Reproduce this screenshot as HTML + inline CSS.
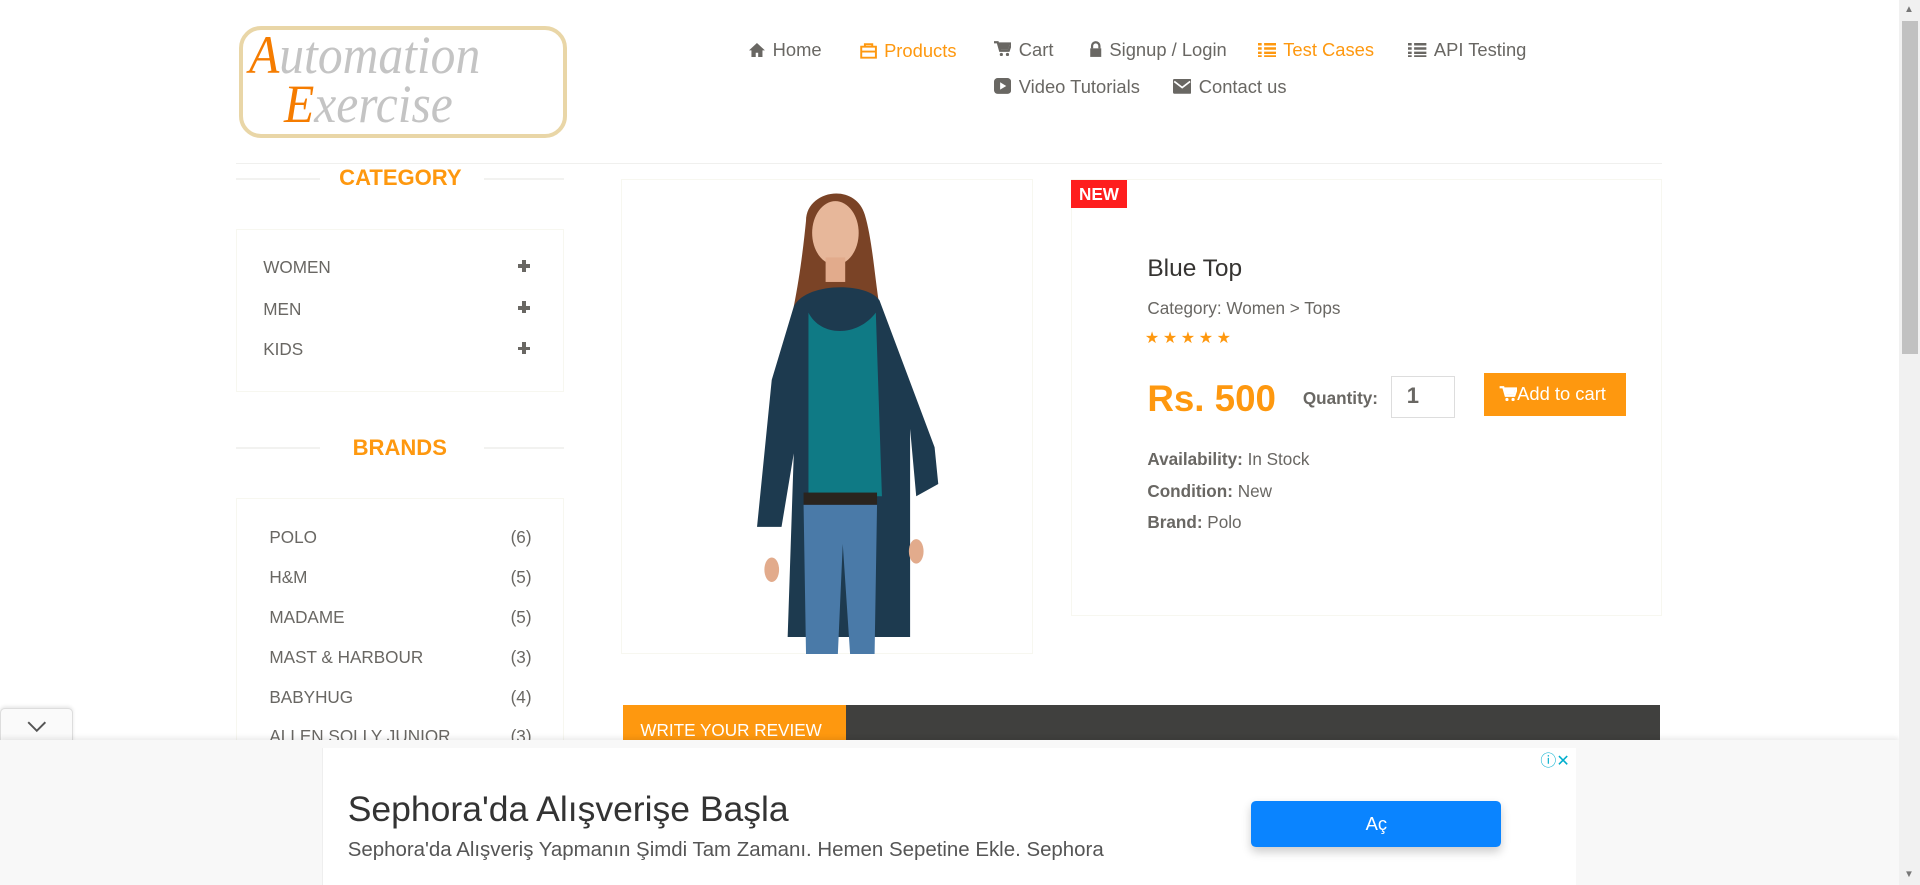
<!DOCTYPE html>
<html><head><meta charset="utf-8">
<style>
html{zoom:1.22449}
*{margin:0;padding:0;box-sizing:border-box}
body{width:1568px;height:723px;overflow:hidden;position:relative;background:#fff;font-family:"Liberation Sans",Arial,sans-serif;color:#696763}
.a{position:absolute;white-space:nowrap}
.nav{font-size:15px;color:#696763}
.nav svg{vertical-align:-1px;margin-right:6px}
.or{color:#FE980F}
.hl{position:absolute;height:2px;background:#f2f2f0}
.box{position:absolute;border:1px solid #F7F7F0}
.h2{font-size:18px;font-weight:bold;color:#FE980F}
.it{font-size:14px;color:#696763}
.b{font-weight:bold}
.pl{position:absolute;width:10px;height:10px}
.pl:before{content:"";position:absolute;left:0;top:4px;width:10px;height:3px;background:#696763}
.pl:after{content:"";position:absolute;left:3.5px;top:0;width:3px;height:10px;background:#696763}
</style></head><body>
<!-- logo -->
<div class="a" style="left:195px;top:21px;width:268px;height:92px;border:4px solid #e9d6a7;border-radius:18px;"></div>
<div class="a" style="left:203px;top:24px;font-family:'Liberation Serif',serif;font-style:italic;font-size:44px;color:#c4c4c4;line-height:44px;transform:scaleX(0.92);transform-origin:left"><span style="color:#f57c00">A</span>utomation</div>
<div class="a" style="left:232px;top:64px;font-family:'Liberation Serif',serif;font-style:italic;font-size:44px;color:#c4c4c4;line-height:44px;transform:scaleX(0.92);transform-origin:left"><span style="color:#f57c00">E</span>xercise</div>

<!-- nav -->
<div class="a nav" style="left:612px;top:32px"><svg width="13" height="12" viewBox="0 0 13 12"><path d="M6.5 0L0 6h2v6h3.5V8h2v4H11V6h2z" fill="#696763"/></svg>Home</div>
<div class="a nav or" style="left:702px;top:33px"><svg width="14" height="13" viewBox="0 0 14 13"><path d="M4 3V1h6v2M1 3h12v9H1zM1 7h12" fill="none" stroke="#FE980F" stroke-width="1.6"/></svg>Products</div>
<div class="a nav" style="left:812px;top:32px"><svg width="14" height="13" viewBox="0 0 14 13"><path d="M0 1h3l2 7h7l2-6H4" fill="none" stroke="#696763" stroke-width="1.8"/><path d="M4 2h9l-1.5 5H5z" fill="#696763"/><circle cx="6" cy="11" r="1.3" fill="#696763"/><circle cx="11" cy="11" r="1.3" fill="#696763"/></svg>Cart</div>
<div class="a nav" style="left:889px;top:32px"><svg width="11" height="13" viewBox="0 0 11 13"><path d="M2.5 6V4a3 3 0 016 0v2" fill="none" stroke="#696763" stroke-width="1.8"/><rect x="1" y="6" width="9" height="7" fill="#696763"/></svg>Signup / Login</div>
<div class="a nav or" style="left:1027px;top:32px"><svg width="15" height="12" viewBox="0 0 15 12"><path d="M0 1h3M5 1h10M0 4.5h3M5 4.5h10M0 8h3M5 8h10M0 11h3M5 11h10" stroke="#FE980F" stroke-width="2"/></svg>Test Cases</div>
<div class="a nav" style="left:1150px;top:32px"><svg width="15" height="12" viewBox="0 0 15 12"><path d="M0 1h3M5 1h10M0 4.5h3M5 4.5h10M0 8h3M5 8h10M0 11h3M5 11h10" stroke="#696763" stroke-width="2"/></svg>API Testing</div>
<div class="a nav" style="left:812px;top:62px"><svg width="14" height="13" viewBox="0 0 14 13"><rect x="0" y="0" width="14" height="13" rx="3" fill="#696763"/><path d="M5 3.5v6l5-3z" fill="#fff"/></svg>Video Tutorials</div>
<div class="a nav" style="left:958px;top:62px"><svg width="15" height="12" viewBox="0 0 15 12"><rect width="15" height="12" rx="1" fill="#696763"/><path d="M1 2l6.5 5L14 2" fill="none" stroke="#fff" stroke-width="1.4"/></svg>Contact us</div>

<div class="hl" style="left:193px;top:133px;width:1164px;height:1px;background:#f0f0ee"></div>

<!-- sidebar -->
<div class="hl" style="left:193px;top:145px;width:68px"></div>
<div class="hl" style="left:395px;top:145px;width:66px"></div>
<div class="a h2" style="left:277px;top:135px">CATEGORY</div>
<div class="box" style="left:193px;top:187px;width:268px;height:133px"></div>
<div class="a it" style="left:215px;top:210px">WOMEN</div>
<div class="a it" style="left:215px;top:244px">MEN</div>
<div class="a it" style="left:215px;top:277px">KIDS</div>
<div class="pl" style="left:423px;top:212px"></div>
<div class="pl" style="left:423px;top:246px"></div>
<div class="pl" style="left:423px;top:279px"></div>

<div class="hl" style="left:193px;top:365px;width:68px"></div>
<div class="hl" style="left:395px;top:365px;width:66px"></div>
<div class="a h2" style="left:288px;top:355px">BRANDS</div>
<div class="box" style="left:193px;top:407px;width:268px;height:220px"></div>
<div class="a it" style="left:220px;top:430px">POLO</div><div class="a it" style="left:417px;top:430px">(6)</div>
<div class="a it" style="left:220px;top:463px">H&amp;M</div><div class="a it" style="left:417px;top:463px">(5)</div>
<div class="a it" style="left:220px;top:496px">MADAME</div><div class="a it" style="left:417px;top:496px">(5)</div>
<div class="a it" style="left:220px;top:528px">MAST &amp; HARBOUR</div><div class="a it" style="left:417px;top:528px">(3)</div>
<div class="a it" style="left:220px;top:561px">BABYHUG</div><div class="a it" style="left:417px;top:561px">(4)</div>
<div class="a it" style="left:220px;top:593px">ALLEN SOLLY JUNIOR</div><div class="a it" style="left:417px;top:593px">(3)</div>

<!-- product image -->
<div class="box" style="left:507px;top:146px;width:337px;height:388px"></div>
<svg class="a" style="left:600px;top:150px" width="180" height="384" viewBox="0 0 180 384">
<path d="M58 30c0-25 40-32 48-5 6 20 8 50 12 75l-70 0c5-25 8-50 10-70z" fill="#7a4326"/>
<ellipse cx="82" cy="40" rx="19" ry="26" fill="#e7b79a"/>
<rect x="74" y="60" width="16" height="20" fill="#e2ab8c"/>
<path d="M48 100c10-20 60-20 70-5l45 120 3 30-18 10-5-55 0 170-100 0 5-150-10 60-20 0 12-120z" fill="#1d3a4f"/>
<path d="M60 105c10 20 40 20 55 0l5 150-60 0z" fill="#0f7a85"/>
<rect x="56" y="252" width="60" height="10" fill="#2a241e"/>
<path d="M56 262h60l-2 122h-20l-6-90-4 90h-26z" fill="#4a7aa8"/>
<ellipse cx="30" cy="315" rx="6" ry="10" fill="#e2ab8c"/>
<ellipse cx="148" cy="300" rx="6" ry="10" fill="#e2ab8c"/>
</svg>

<!-- info -->
<div class="box" style="left:875px;top:146px;width:482px;height:357px"></div>
<div class="a" style="left:875px;top:147px;width:45px;height:23px;background:#fe1e1e;color:#fff;font-weight:bold;font-size:14px;text-align:center;line-height:23px">NEW</div>
<div class="a" style="left:937px;top:208px;font-size:20px;color:#363432">Blue Top</div>
<div class="a" style="left:937px;top:243px;font-size:14px;color:#696763">Category: Women &gt; Tops</div>
<div class="a" style="left:935px;top:268px;font-size:13px;color:#FE980F;letter-spacing:3px">★★★★★</div>
<div class="a" style="left:937px;top:309px;font-size:30px;font-weight:bold;color:#FE980F">Rs. 500</div>
<div class="a" style="left:1064px;top:317px;font-size:14px;font-weight:bold;color:#696763">Quantity:</div>
<div class="a" style="left:1136px;top:307px;width:52px;height:34px;border:1px solid #ddd;font-size:18px;font-weight:bold;color:#696763;padding:5px 0 0 12px">1</div>
<div class="a" style="left:1212px;top:305px;width:116px;height:35px;background:#FE980F;color:#fff;font-size:15px;line-height:34px;padding-left:12px"><svg width="15" height="13" viewBox="0 0 14 13" style="vertical-align:-1px"><path d="M0 1h3l2 7h7l2-6H4" fill="none" stroke="#fff" stroke-width="1.8"/><path d="M4 2h9l-1.5 5H5z" fill="#fff"/><circle cx="6" cy="11" r="1.3" fill="#fff"/><circle cx="11" cy="11" r="1.3" fill="#fff"/></svg>Add to cart</div>
<div class="a" style="left:937px;top:367px;font-size:14px"><b>Availability:</b> In Stock</div>
<div class="a" style="left:937px;top:393px;font-size:14px"><b>Condition:</b> New</div>
<div class="a" style="left:937px;top:418px;font-size:14px"><b>Brand:</b> Polo</div>

<!-- review bar -->
<div class="a" style="left:509px;top:576px;width:847px;height:40px;background:#40403E"></div>
<div class="a" style="left:509px;top:576px;width:182px;height:40px;background:#FE980F;color:#fff;font-size:14px;padding:12px 0 0 14px">WRITE YOUR REVIEW</div>

<!-- ad overlay -->
<div class="a" style="left:0;top:578px;width:60px;height:28px;background:#fafafa;border:1px solid #ddd;border-bottom:none;border-radius:4px 4px 0 0;box-shadow:0 -1px 3px rgba(0,0,0,.1)"><svg width="16" height="10" viewBox="0 0 16 10" style="position:absolute;left:21px;top:10px"><path d="M1 1l7 7 7-7" fill="none" stroke="#555" stroke-width="1.6"/></svg></div>
<div class="a" style="left:0;top:604px;width:1551px;height:119px;background:#f8f8f8;box-shadow:0 -2px 4px rgba(0,0,0,.08)"></div>
<div class="a" style="left:263px;top:611px;width:1024px;height:112px;background:#fff;border-left:1px solid #eee"></div>
<div class="a" style="left:1258px;top:611px;font-size:13px;color:#00aecd">ⓘ✕</div>
<div class="a" style="left:284px;top:644px;font-size:29px;color:#333">Sephora'da Alışverişe Başla</div>
<div class="a" style="left:284px;top:684px;font-size:16.7px;color:#555">Sephora'da Alışveriş Yapmanın Şimdi Tam Zamanı. Hemen Sepetine Ekle. Sephora</div>
<div class="a" style="left:1022px;top:654px;width:204px;height:38px;background:#0a84ff;border-radius:4px;color:#fff;font-size:15px;text-align:center;line-height:38px;box-shadow:0 4px 8px rgba(0,0,0,.2)">Aç</div>

<!-- scrollbar -->
<div class="a" style="left:1551px;top:0;width:17px;height:723px;background:#f1f1f1"></div>
<div class="a" style="left:1553px;top:17px;width:13px;height:272px;background:#c1c1c1"></div>
<div class="a" style="left:1555px;top:3px;font-size:8px;color:#777">▲</div>
<div class="a" style="left:1555px;top:710px;font-size:8px;color:#777">▼</div>
</body></html>
